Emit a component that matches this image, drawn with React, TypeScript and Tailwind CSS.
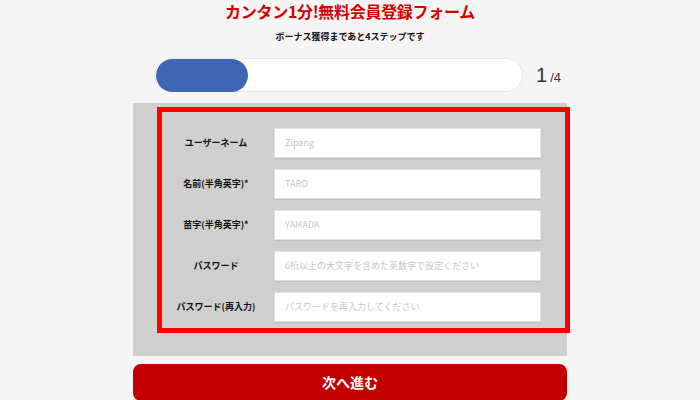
import React from "react";

const rows = [
  { label: "ユーザーネーム", ph: "Zipang" },
  { label: "名前(半角英字)*", ph: "TARO" },
  { label: "苗字(半角英字)*", ph: "YAMADA" },
  { label: "パスワード", ph: "6桁以上の大文字を含めた英数字で設定ください" },
  { label: "パスワード(再入力)", ph: "パスワードを再入力してください" },
];

export default function App() {
  return (
    <div
      className="min-h-[400px] w-full bg-[#f5f5f5] overflow-hidden"
      style={{ fontFamily: '"Noto Sans CJK JP", "Noto Sans", sans-serif' }}
    >
      <div className="w-[434px] mx-auto">
        <h1 className="text-center text-[16px] font-bold text-[#d40000] leading-[22px] tracking-[-0.3px]">
          カンタン1分!無料会員登録フォーム
        </h1>
        <p className="mt-[9px] text-center text-[9px] font-bold leading-[12px] text-[#111]">
          ボーナス獲得まであと4ステップです
        </p>
        <div className="mt-[15px] flex items-center">
          <div className="ml-[21px] w-[369px] h-[34px] rounded-full bg-white border border-[#e6e6e6] flex items-center px-[1px]">
            <div className="w-[92px] h-[33px] rounded-full bg-[#3f66b3]" />
          </div>
          <div
            className="ml-[13px] flex items-baseline text-[#333]"
            style={{ fontFamily: '"Liberation Sans", Arial, sans-serif' }}
          >
            <span className="text-[20px] leading-none">1</span>
            <span className="ml-[3px] text-[13px] leading-none">/4</span>
          </div>
        </div>
        <div className="mt-[11px] h-[253px] bg-[#cfcfcf] pt-[4px]">
          <div className="ml-[24px] w-[413px] border-[5px] border-[#ff0000] pt-[16px] pb-[6px] flex flex-col gap-[11px]">
            {rows.map((r) => (
              <div key={r.label} className="flex items-center h-[30px]">
                <div className="w-[108px] text-center text-[9px] font-bold text-[#111]">
                  {r.label}
                </div>
                <div className="ml-[4px] w-[267px] h-[30px] bg-white border border-[#e2e2e2] shadow-[0_1px_1px_rgba(0,0,0,0.08)] flex items-center pl-[10px] text-[9px] text-[#c6c6c6]">
                  {r.ph}
                </div>
              </div>
            ))}
          </div>
        </div>
        <button className="mt-[8px] w-full h-[37px] rounded-[8px] bg-[#c20000] text-white text-[14px] font-bold flex items-center justify-center">
          次へ進む
        </button>
      </div>
    </div>
  );
}
